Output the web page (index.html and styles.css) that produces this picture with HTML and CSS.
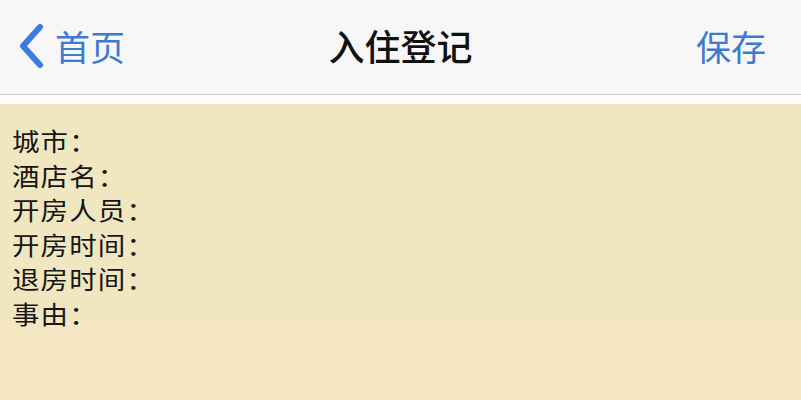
FILE: index.html
```html
<!DOCTYPE html>
<html lang="zh">
<head>
<meta charset="utf-8">
<title>入住登记</title>
<link rel="stylesheet" href="styles.css">
</head>
<body>
<header class="navbar">
  <a class="back">
    <svg class="chevron" width="26" height="44" viewBox="0 0 26 44"><path d="M22 3 L5 22 L22 41" fill="none" stroke="#3a7be6" stroke-width="6" stroke-linecap="round" stroke-linejoin="round"/></svg>
    <span class="back-text">首页</span>
  </a>
  <h1 class="title">入住登记</h1>
  <a class="save">保存</a>
</header>
<div class="gap"></div>
<main class="form">
  <div class="row">城市：</div>
  <div class="row">酒店名：</div>
  <div class="row">开房人员：</div>
  <div class="row">开房时间：</div>
  <div class="row">退房时间：</div>
  <div class="row">事由：</div>
</main>
</body>
</html>
```
FILE: styles.css
```css
html, body {
  margin: 0;
  padding: 0;
  height: 100%;
}
body {
  font-family: "Noto Sans CJK SC", "Noto Sans", sans-serif;
  background: #f4e6c3;
  overflow: hidden;
}
.navbar {
  box-sizing: border-box;
  height: 95px;
  background: #f7f7f7;
  border-bottom: 1px solid #c9c9c9;
  display: flex;
  align-items: center;
  justify-content: space-between;
  position: relative;
}
.back {
  display: flex;
  align-items: center;
  margin-left: 18px;
  color: #3d7bd3;
  margin-top: -3px;
}
.chevron {
  display: block;
}
.back-text {
  font-size: 35px;
  margin-left: 11px;
  line-height: 1;
}
.title {
  font-size: 36px;
  font-weight: 500;
  color: #111;
  margin: 0;
  position: absolute;
  left: 0;
  right: 0;
  text-align: center;
  line-height: 1;
  top: 27px;
  pointer-events: none;
}
.save {
  font-size: 35px;
  color: #3d7bd3;
  margin-right: 35px;
  line-height: 1;
  margin-top: -3px;
}
.gap {
  height: 9px;
  background: #fefcfc;
}
.form {
  box-sizing: border-box;
  background: linear-gradient(#f0e7c0 0, #f0e7c0 215px, #f5e6c4 217px);
  padding: 19px 0 0 12px;
  height: 296px;
  color: #151515;
}
.row {
  width: fit-content;
  font-size: 25px;
  line-height: 34.6px;
  height: 34.6px;
  letter-spacing: 1px;
  white-space: nowrap;
  transform: scaleX(1.1);
  transform-origin: left center;
}
```
